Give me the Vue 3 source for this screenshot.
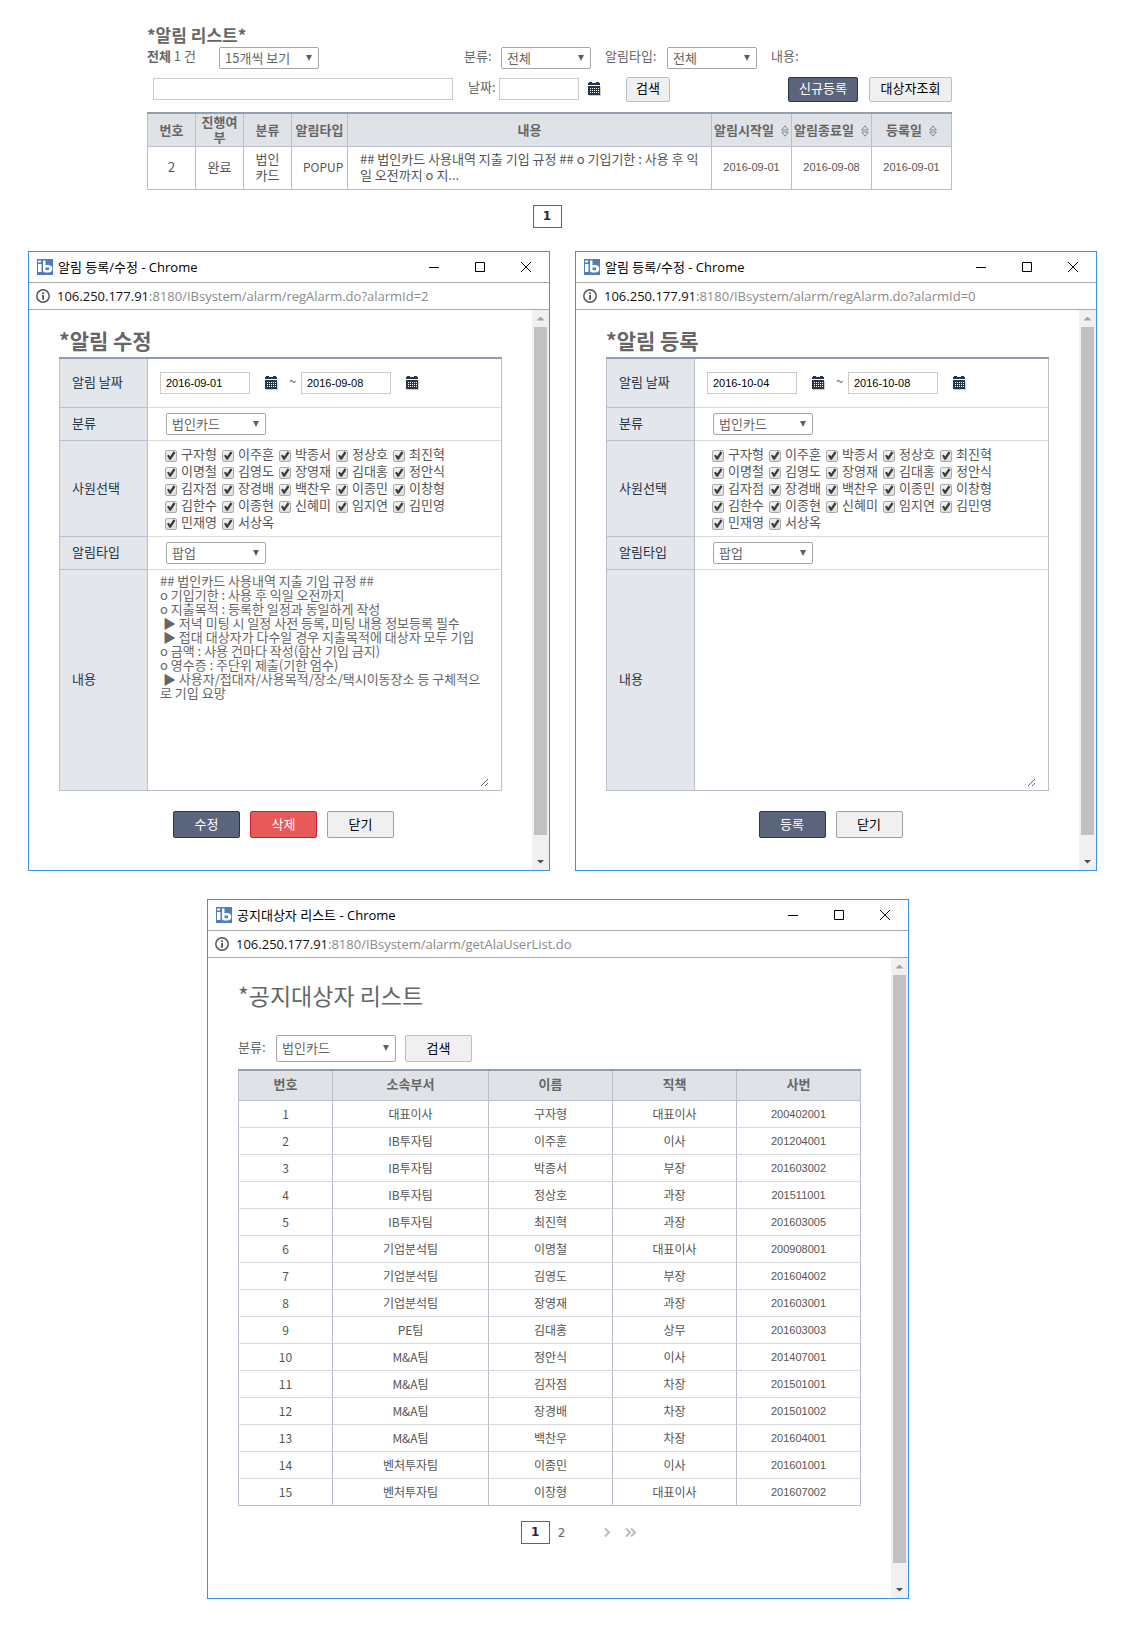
<script setup>
import { reactive, ref } from 'vue'

const staff = [
  '구자형', '이주훈', '박종서', '정상호', '최진혁',
  '이명철', '김영도', '장영재', '김대홍', '정안식',
  '김자점', '장경배', '백찬우', '이종민', '이창형',
  '김한수', '이종현', '신혜미', '임지연', '김민영',
  '민재영', '서상옥',
]

const host = '106.250.177.91'

const notice = [
  '## 법인카드 사용내역 지출 기입 규정 ##',
  'o 기입기한 : 사용 후 익일 오전까지',
  'o 지출목적 : 등록한 일정과 동일하게 작성',
  ' ▶ 저녁 미팅 시 일정 사전 등록, 미팅 내용 정보등록 필수',
  ' ▶ 접대 대상자가 다수일 경우 지출목적에 대상자 모두 기입',
  'o 금액 : 사용 건마다 작성(합산 기입 금지)',
  'o 영수증 : 주단위 제출(기한 엄수)',
  ' ▶ 사용자/접대자/사용목적/장소/택시이동장소 등 구체적으로 기입 요망',
].join('\n')

const forms = reactive([
  {
    id: 'edit',
    heading: '*알림 수정',
    path: ':8180/IBsystem/alarm/regAlarm.do?alarmId=2',
    start: '2016-09-01',
    end: '2016-09-08',
    picked: [...staff],
    body: notice,
    actions: [
      { text: '수정', kind: 'primary' },
      { text: '삭제', kind: 'danger' },
      { text: '닫기', kind: 'plain' },
    ],
  },
  {
    id: 'new',
    heading: '*알림 등록',
    path: ':8180/IBsystem/alarm/regAlarm.do?alarmId=0',
    start: '2016-10-04',
    end: '2016-10-08',
    picked: [...staff],
    body: '',
    actions: [
      { text: '등록', kind: 'primary' },
      { text: '닫기', kind: 'plain' },
    ],
  },
])

const users = [
  ['대표이사', '구자형', '대표이사', '200402001'],
  ['IB투자팀', '이주훈', '이사', '201204001'],
  ['IB투자팀', '박종서', '부장', '201603002'],
  ['IB투자팀', '정상호', '과장', '201511001'],
  ['IB투자팀', '최진혁', '과장', '201603005'],
  ['기업분석팀', '이명철', '대표이사', '200908001'],
  ['기업분석팀', '김영도', '부장', '201604002'],
  ['기업분석팀', '장영재', '과장', '201603001'],
  ['PE팀', '김대홍', '상무', '201603003'],
  ['M&A팀', '정안식', '이사', '201407001'],
  ['M&A팀', '김자점', '차장', '201501001'],
  ['M&A팀', '장경배', '차장', '201501002'],
  ['M&A팀', '백찬우', '차장', '201604001'],
  ['벤처투자팀', '이종민', '이사', '201601001'],
  ['벤처투자팀', '이창형', '대표이사', '201607002'],
]

const keyword = ref('')
const day = ref('')
</script>

<template>
  <svg class="sprite" aria-hidden="true">
    <symbol id="i-logo" viewBox="0 0 16 16">
      <rect width="16" height="16" fill="#4f7db8" />
      <path d="M1 1.500h3v2H1zM1 5h3.500v8H1zM6 1.500h2.500V6h2.500a4 3.500 0 0 1 0 7.500H8.500A2.500 2.500 0 0 1 6 11z" fill="#fff" />
      <path d="M8.500 8.500h2.300a1.500 1.400 0 0 1 0 2.800h-1a1.300 1.300 0 0 1-1.300-1.300z" fill="#4f7db8" />
    </symbol>
    <symbol id="i-info" viewBox="0 0 14 14">
      <circle cx="7" cy="7" r="6.200" fill="none" stroke="#555" stroke-width="1.500" />
      <path d="M6.200 3.300h1.700v1.600H6.200zM6.200 6h1.700v4.800H6.200z" fill="#444" />
    </symbol>
    <symbol id="i-cal" viewBox="0 0 13 14">
      <path d="M1 14h12V5h-1v8H1z" fill="#ccc" />
      <path d="M0 1h1V0h3v1h4V0h3v1h1v2H0z" fill="#27344a" />
      <path d="M0 4h12v9H0z" fill="#27344a" />
      <path d="M2 6h1v1H2zm2 0h1v1H4zm2 0h1v1H6zm2 0h1v1H8zm2 0h1v1h-1zM2 8h1v1H2zm2 0h1v1H4zm2 0h1v1H6zm2 0h1v1H8zm2 0h1v1h-1zM2 10h1v1H2zm2 0h1v1H4zm2 0h1v1H6zm2 0h1v1H8zm2 0h1v1h-1z" fill="#fff" />
    </symbol>
    <symbol id="i-sort" viewBox="0 0 8 12">
      <path d="M4 .8 7.300 5H.700zM4 11.200 7.300 7H.700z" fill="none" stroke="#8088a0" />
    </symbol>
    <symbol id="i-min" viewBox="0 0 10 10"><path d="M0 5.500h10" stroke="#000" /></symbol>
    <symbol id="i-max" viewBox="0 0 10 10"><path d="M.5.500h9v9h-9z" fill="none" stroke="#000" /></symbol>
    <symbol id="i-close" viewBox="0 0 10 10"><path d="M0 0l10 10M10 0 0 10" stroke="#000" /></symbol>
    <symbol id="i-next" viewBox="0 0 7 9"><path d="M1 .5l4 4-4 4" fill="none" stroke="#bbb" stroke-width="2" /></symbol>
    <symbol id="i-last" viewBox="0 0 12 9"><path d="M1 .5l4 4-4 4M6 .5l4 4-4 4" fill="none" stroke="#bbb" stroke-width="2" /></symbol>
  </svg>

  <main class="page">
    <section class="board">
      <h1 class="board-title">*알림 리스트*</h1>
      <div class="bar">
        <span class="count"><b>전체</b> 1 건</span>
        <span class="pick w100">
          <select aria-label="보기 개수"><option>15개씩 보기</option></select>
        </span>
        <div class="filters">
          <label for="f-kind" class="l-kind">분류:</label>
          <span class="pick w90"><select id="f-kind"><option>전체</option></select></span>
          <label for="f-type" class="l-type">알림타입:</label>
          <span class="pick w90"><select id="f-type"><option>전체</option></select></span>
          <label for="f-word" class="l-word">내용:</label>
        </div>
      </div>
      <div class="bar bar-second">
        <input id="f-word" v-model="keyword" class="field word" type="text" />
        <label for="f-day" class="l-day">날짜:</label>
        <input id="f-day" v-model="day" class="field day" type="text" />
        <button class="icon-btn" type="button" aria-label="날짜 선택"><svg width="13" height="14"><use href="#i-cal" /></svg></button>
        <button class="btn soft find" type="button">검색</button>
        <div class="board-actions">
          <button class="btn primary" type="button">신규등록</button>
          <button class="btn soft" type="button">대상자조회</button>
        </div>
      </div>

      <table class="grid alarms">
        <colgroup>
          <col class="c49" /><col class="c48" /><col class="c48" /><col class="c56" />
          <col /><col class="c80" /><col class="c80" /><col class="c80" />
        </colgroup>
        <thead>
          <tr>
            <th>번호</th><th>진행여부</th><th>분류</th><th>알림타입</th><th>내용</th>
            <th>알림시작일 <svg class="sort"><use href="#i-sort" /></svg></th>
            <th>알림종료일 <svg class="sort"><use href="#i-sort" /></svg></th>
            <th>등록일 <svg class="sort"><use href="#i-sort" /></svg></th>
          </tr>
        </thead>
        <tbody>
          <tr>
            <td>2</td>
            <td>완료</td>
            <td>법인 카드</td>
            <td class="type">POPUP</td>
            <td class="subject">## 법인카드 사용내역 지출 기입 규정 ## o 기입기한 : 사용 후 익일 오전까지 o 지...</td>
            <td class="date">2016-09-01</td>
            <td class="date">2016-09-08</td>
            <td class="date">2016-09-01</td>
          </tr>
        </tbody>
      </table>
      <nav class="pager" aria-label="알림 페이지"><a class="current" href="#">1</a></nav>
    </section>

    <div class="pair">
      <section v-for="form in forms" :key="form.id" class="window">
        <header class="titlebar">
          <svg class="logo"><use href="#i-logo" /></svg>
          <span class="caption">알림 등록/수정 - Chrome</span>
          <button type="button" aria-label="최소화"><svg><use href="#i-min" /></svg></button>
          <button type="button" aria-label="최대화"><svg><use href="#i-max" /></svg></button>
          <button type="button" aria-label="창 닫기"><svg><use href="#i-close" /></svg></button>
        </header>
        <div class="address">
          <svg><use href="#i-info" /></svg>
          <span>{{ host }}<i>{{ form.path }}</i></span>
        </div>
        <div class="viewport">
          <form class="content" @submit.prevent>
            <h2>{{ form.heading }}</h2>
            <table class="sheet">
              <tbody>
                <tr class="r-date">
                  <th><label :for="form.id + '-start'">알림 날짜</label></th>
                  <td>
                    <div class="range">
                      <input :id="form.id + '-start'" v-model="form.start" class="field stamp" type="text" />
                      <button class="icon-btn" type="button" aria-label="시작일 선택"><svg width="13" height="14"><use href="#i-cal" /></svg></button>
                      <span class="tilde">~</span>
                      <input v-model="form.end" class="field stamp" type="text" aria-label="종료일" />
                      <button class="icon-btn" type="button" aria-label="종료일 선택"><svg width="13" height="14"><use href="#i-cal" /></svg></button>
                    </div>
                  </td>
                </tr>
                <tr class="r-pick">
                  <th><label :for="form.id + '-kind'">분류</label></th>
                  <td class="inset"><span class="pick w100"><select :id="form.id + '-kind'"><option>법인카드</option></select></span></td>
                </tr>
                <tr class="r-staff">
                  <th>사원선택</th>
                  <td>
                    <div class="staff">
                      <label v-for="name in staff" :key="name"><input v-model="form.picked" type="checkbox" :value="name" />{{ name }}</label>
                    </div>
                  </td>
                </tr>
                <tr class="r-pick">
                  <th><label :for="form.id + '-type'">알림타입</label></th>
                  <td class="inset"><span class="pick w100"><select :id="form.id + '-type'"><option>팝업</option></select></span></td>
                </tr>
                <tr class="r-body">
                  <th><label :for="form.id + '-body'">내용</label></th>
                  <td><textarea :id="form.id + '-body'" v-model="form.body" spellcheck="false"></textarea></td>
                </tr>
              </tbody>
            </table>
            <div class="actions">
              <button v-for="action in form.actions" :key="action.text" class="btn wide" :class="action.kind" type="button">{{ action.text }}</button>
            </div>
          </form>
          <div class="scroll" aria-hidden="true"><span class="up"></span><span class="thumb"></span><span class="down"></span></div>
        </div>
      </section>
    </div>

    <section class="window targets">
      <header class="titlebar">
        <svg class="logo"><use href="#i-logo" /></svg>
        <span class="caption">공지대상자 리스트 - Chrome</span>
        <button type="button" aria-label="최소화"><svg><use href="#i-min" /></svg></button>
        <button type="button" aria-label="최대화"><svg><use href="#i-max" /></svg></button>
        <button type="button" aria-label="창 닫기"><svg><use href="#i-close" /></svg></button>
      </header>
      <div class="address">
        <svg><use href="#i-info" /></svg>
        <span>{{ host }}<i>:8180/IBsystem/alarm/getAlaUserList.do</i></span>
      </div>
      <div class="viewport">
        <div class="content">
          <h2>*공지대상자 리스트</h2>
          <div class="bar search">
            <label for="t-kind" class="l-kind">분류:</label>
            <span class="pick w120"><select id="t-kind"><option>법인카드</option></select></span>
            <button class="btn soft wide" type="button">검색</button>
          </div>
          <table class="grid users">
            <colgroup><col class="u-no" /><col class="u-team" /><col /><col /><col /></colgroup>
            <thead>
              <tr><th>번호</th><th>소속부서</th><th>이름</th><th>직책</th><th>사번</th></tr>
            </thead>
            <tbody>
              <tr v-for="(user, i) in users" :key="user[3]">
                <td>{{ i + 1 }}</td>
                <td>{{ user[0] }}</td>
                <td>{{ user[1] }}</td>
                <td>{{ user[2] }}</td>
                <td class="serial">{{ user[3] }}</td>
              </tr>
            </tbody>
          </table>
          <nav class="pager" aria-label="대상자 페이지">
            <a class="current" href="#">1</a>
            <a href="#">2</a>
            <a class="next" href="#" aria-label="다음"><svg width="7" height="9"><use href="#i-next" /></svg></a>
            <a class="last" href="#" aria-label="마지막"><svg width="12" height="9"><use href="#i-last" /></svg></a>
          </nav>
        </div>
        <div class="scroll" aria-hidden="true"><span class="up"></span><span class="thumb"></span><span class="down"></span></div>
      </div>
    </section>
  </main>
</template>

<style>
body {
  background: #fff;
}
</style>

<style scoped>
.sprite {
  position: absolute;
  width: 0;
  height: 0;
}

.page,
.page * {
  box-sizing: border-box;
}

.page {
  padding: 23px 25px 26px 28px;
  color: #666;
  font-family: "Noto Sans CJK KR", sans-serif;
  font-size: 13px;
  line-height: 16px;
}

button,
input,
select,
textarea {
  margin: 0;
  font: inherit;
}

h1,
h2 {
  margin: 0;
}

svg {
  display: block;
  flex: none;
}

/* alarm list */
.board {
  max-width: 805px;
  margin-left: 119px;
}

.board-title {
  font-size: 17px;
  line-height: 24px;
}

.bar {
  display: flex;
  align-items: center;
}

.bar-second {
  height: 26px;
  margin: 7px 0 10px;
  padding-left: 6px;
}

.count {
  width: 72px;
}

.count,
.bar label {
  padding-bottom: 4px;
}

.filters {
  display: flex;
  align-items: center;
  margin-left: 145px;
}

.l-kind {
  width: 37px;
}

.l-type {
  width: 76px;
  padding-left: 14px;
}

.l-word {
  padding-left: 14px;
}

.l-day {
  width: 46px;
  padding-left: 15px;
}

.pick {
  display: inline-flex;
  position: relative;
  height: 22px;
}

.pick::after {
  content: "";
  position: absolute;
  top: 8px;
  right: 7px;
  width: 6px;
  height: 6px;
  background: #606060;
  clip-path: polygon(0 0, 100% 0, 50% 100%);
  pointer-events: none;
}

.pick select {
  appearance: none;
  width: 100%;
  padding: 0 16px 1px 5px;
  border: 1px solid #a6a6a6;
  border-radius: 2px;
  background: #fff;
  color: #666;
}

.w90 {
  width: 90px;
}

.w100 {
  width: 100px;
}

.w120 {
  width: 120px;
}

.field {
  height: 22px;
  padding: 0 5px;
  border: 1px solid #ccc;
  background: #fff;
  color: #000;
}

.word {
  width: 300px;
}

.day {
  width: 80px;
}

.icon-btn {
  margin-left: 9px;
  padding: 0;
  border: 0;
  background: none;
}

.btn {
  height: 25px;
  padding: 0 8px 2px;
  border: 1px solid #b9bfcd;
  border-radius: 2px;
  background: #f0f0f0;
  color: #000;
  white-space: nowrap;
}

.find {
  width: 44px;
  margin-left: 25px;
}

.board-actions {
  display: flex;
  gap: 11px;
  margin-left: auto;
}

.board-actions .btn {
  min-width: 70px;
}

.board-actions .soft {
  min-width: 83px;
}

.btn.primary {
  border-color: #2b364b;
  background: #5a647b;
  color: #fff;
}

.btn.danger {
  border-color: #cc1f36;
  background: #e85a5a;
  color: #fff;
}

.btn.plain {
  border-color: #a0a0a0;
}

.btn.wide {
  width: 67px;
  height: 27px;
}

/* data grids */
.grid {
  width: 100%;
  border-collapse: separate;
  border-spacing: 0;
  border-top: 2px solid #929dad;
  table-layout: fixed;
}

.grid th,
.grid td {
  padding: 0;
  border-right: 1px solid #b9bfcd;
  border-bottom: 1px solid #b9bfcd;
  text-align: center;
}

.grid th:first-child,
.grid td:first-child {
  border-left: 1px solid #b9bfcd;
}

.grid th {
  background: #dfe2e7;
  color: #666;
}

.grid td {
  color: #555;
}

.alarms th {
  height: 33px;
  line-height: 15px;
  padding-bottom: 2px;
}

.alarms td {
  height: 43px;
  padding: 0 11px 2px;
}

.alarms .subject {
  padding: 0 12px 2px;
  text-align: left;
}

.alarms .type {
  font-size: 12px;
}

.grid .date {
  font-family: "Liberation Sans", sans-serif;
  font-size: 11px;
}

.c48 {
  width: 48px;
}

.c49 {
  width: 49px;
}

.c56 {
  width: 56px;
}

.c80 {
  width: 80px;
}

.sort {
  display: inline-block;
  width: 8px;
  height: 12px;
  margin-left: 4px;
  vertical-align: -2px;
}

.pager {
  display: flex;
  justify-content: center;
  align-items: center;
  height: 23px;
  margin-top: 15px;
  padding-right: 5px;
  font-family: "DejaVu Sans", sans-serif;
  font-size: 12px;
}

.pager a {
  color: #666;
  text-decoration: none;
}

.pager .current {
  width: 29px;
  height: 23px;
  border: 1px solid #5a647b;
  color: #1f2a3d;
  font-weight: bold;
  line-height: 21px;
  text-align: center;
}

/* browser windows */
.pair {
  display: flex;
  gap: 25px;
  margin: 23px 0 28px;
}

.window {
  display: flex;
  flex-direction: column;
  border: 1px solid #3a92ec;
  background: #fff;
}

.pair .window {
  flex: 1;
  min-width: 0;
}

.titlebar {
  display: flex;
  align-items: center;
  height: 31px;
  padding-left: 8px;
  border-bottom: 1px solid #a9a9a9;
}

.logo {
  width: 16px;
  height: 16px;
}

.caption {
  flex: 1;
  padding-left: 5px;
  color: #000;
  font-family: "Open Sans", "Noto Sans CJK KR", sans-serif;
  font-size: 13px;
}

.titlebar button {
  display: flex;
  justify-content: center;
  align-items: center;
  width: 46px;
  height: 30px;
  padding: 0;
  border: 0;
  background: none;
}

.titlebar button svg {
  width: 10px;
  height: 10px;
}

.address {
  display: flex;
  align-items: center;
  gap: 7px;
  height: 27px;
  padding-left: 7px;
  border-bottom: 1px solid #a9a9a9;
  color: #111;
  font-family: "Open Sans", "Noto Sans CJK KR", sans-serif;
  font-size: 13px;
}

.address svg {
  width: 14px;
  height: 14px;
}

.address i {
  color: #8a8a8a;
  font-style: normal;
}

.viewport {
  display: flex;
  flex: 1;
}

.content {
  flex: 1;
  min-width: 0;
  padding: 15px 30px 32px;
}

.content h2 {
  font-size: 21px;
  line-height: 30px;
  margin-bottom: 2px;
}

.scroll {
  display: flex;
  flex-direction: column;
  align-items: center;
  width: 17px;
  background: #f0f0f0;
}

.thumb {
  flex: 1;
  width: 13px;
  margin-bottom: 18px;
  background: #c1c1c1;
}

.up,
.down {
  display: flex;
  justify-content: center;
  align-items: center;
  height: 17px;
}

.up::before,
.down::before {
  content: "";
  width: 8px;
  height: 4px;
  background: #a3a3a3;
  clip-path: polygon(50% 0, 100% 100%, 0 100%);
}

.down::before {
  background: #505050;
  clip-path: polygon(0 0, 100% 0, 50% 100%);
}

/* alarm form */
.sheet {
  width: 100%;
  border-collapse: separate;
  border-spacing: 0;
  border-top: 2px solid #929dad;
}

.sheet th {
  width: 89px;
  padding: 0 12px 2px;
  border: 1px solid #b9bfcd;
  border-top: 0;
  background: #e3e6eb;
  color: #27344a;
  font-weight: normal;
  text-align: left;
}

.sheet td {
  padding: 0 12px;
  border-right: 1px solid #b9bfcd;
  border-bottom: 1px solid #d9dadd;
}

.sheet .inset {
  padding-left: 18px;
}

.sheet tr:last-child td {
  border-bottom-color: #b9bfcd;
}

.sheet .pick {
  display: flex;
}

.r-date {
  height: 49px;
}

.r-pick {
  height: 33px;
}

.r-staff {
  height: 96px;
}

.r-body {
  height: 221px;
}

.range {
  display: flex;
  align-items: center;
}

.range .icon-btn {
  margin-left: 15px;
}

.stamp {
  width: 90px;
  font-family: "Liberation Sans", sans-serif;
  font-size: 11px;
}

.tilde {
  width: 23px;
  padding: 0 0 4px 11px;
}

.staff {
  display: grid;
  grid-template-columns: repeat(5, 57px);
  grid-auto-rows: 17px;
  padding-left: 5px;
}

.staff label {
  display: flex;
  align-items: center;
  gap: 4px;
  padding-bottom: 2px;
  color: #555;
}

.staff input {
  appearance: none;
  width: 12px;
  height: 12px;
  margin-top: 4px;
  border: 1px solid #aaa;
  border-radius: 2px;
  background: linear-gradient(#f2f2f2, #dcdcdc);
}

.staff input:checked::before {
  content: "";
  display: block;
  width: 10px;
  height: 10px;
  background: #3c3c3c;
  clip-path: polygon(10% 50%, 28% 42%, 42% 60%, 76% 8%, 95% 22%, 48% 92%, 34% 92%);
}

textarea {
  display: block;
  width: 100%;
  height: 213px;
  padding: 0;
  border: 0;
  outline: 0;
  background: #fff;
  color: #666;
  line-height: 14px;
  overflow: hidden;
  resize: both;
}

.actions {
  display: flex;
  justify-content: center;
  gap: 10px;
  margin-top: 20px;
  padding-left: 6px;
}

/* recipients window */
.targets {
  max-width: 702px;
  margin-left: 179px;
}

.targets .content {
  padding: 22px 30px 54px;
}

.targets h2 {
  margin-bottom: 25px;
  font-size: 23px;
  font-weight: normal;
}

.search {
  margin-bottom: 7px;
}

.search .l-kind {
  width: 38px;
}

.search .pick {
  height: 27px;
  margin-right: 9px;
}

.search .pick::after {
  top: 10px;
}

.users th {
  height: 30px;
  padding-bottom: 3px;
}

.users td {
  height: 27px;
  padding-bottom: 1px;
  border-bottom-color: #d9dadd;
  font-size: 12px;
}

.users tr:last-child td {
  border-bottom-color: #b9bfcd;
}

.users .serial {
  font-family: "Liberation Sans", sans-serif;
  font-size: 11px;
}

.u-no {
  width: 95px;
}

.u-team {
  width: 156px;
}

.targets .pager {
  gap: 8px;
  padding-left: 64px;
}

.targets .next {
  margin-left: 31px;
}

.targets .last {
  margin-left: 6px;
}
</style>
